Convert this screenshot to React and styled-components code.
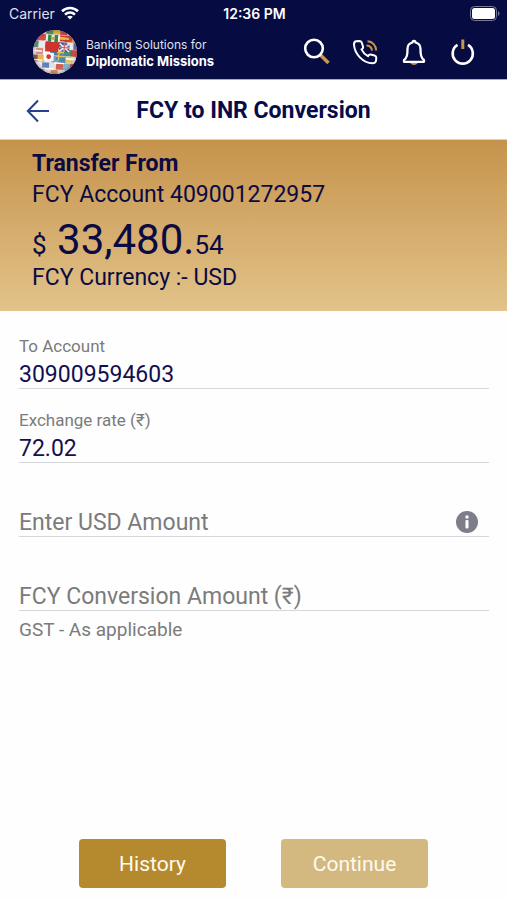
import React from 'react'
import styled, { createGlobalStyle } from 'styled-components'


const flags = [
	['#c8372f', '#f0e6e4', '#3f8a4d', '#d9b23a', '#c23b35', '#e8e4ea', '#4a62a8'],
	['#5470ae', '#d8504a', '#f2efe9', '#2f8a50', '#f3f1f0', '#cf3a2c', '#e0b040'],
	['#4f8f68', '#e9e9ef', '#c4302c', '#cf3230', '#39508f', '#ece8ee', '#5a6cb0'],
	['#e6e2e6', '#d98a78', '#f6f4f6', '#4a79ad', '#e8c44c', '#3d9470', '#c84038'],
	['#7a4a50', '#e4b44e', '#f0eef0', '#7fa4cc', '#5688bb', '#ddc768', '#e8e4e2'],
	['#d24b38', '#f1ece6', '#5a82bd', '#e4e0e2', '#d2604e', '#7bb0c8', '#b8433d'],
	['#dca85a', '#cb4638', '#ece6e4', '#c98c52', '#e6e2e2', '#4e78ae', '#d8d0cf'],
]

const Globe = () => {
	return (
		<svg width="44" height="44" viewBox="0 0 44 44" aria-hidden="true">
			<defs>
				<clipPath id="ball"><circle cx="22" cy="22" r="22" /></clipPath>
				<radialGradient id="shade">
					<stop offset="0.75" stopColor="#fff" stopOpacity="0" />
					<stop offset="1" stopColor="#5a2030" stopOpacity="0.3" />
				</radialGradient>
			</defs>
			<g clipPath="url(#ball)">
				<rect width="44" height="44" fill="#e5dde0" />
				<g transform="rotate(4 22 22)">
					{flags.map((row, y) => row.map((color, x) => (
						<rect key={`${x}-${y}`} x={x * 7 - 2 - (y % 2) * 2} y={y * 7 - 2} width="7.4" height="6.4" fill={color} />
					)))}
					<path d="M7 5h5v6H7z" fill="#d94236" />
					<path d="M12 5h2v6h-2z" fill="#f3eeee" />
					<path d="M14 5h10v7H14z" fill="#35884d" />
					<path d="M17.5 5h3v7h-3z" fill="#f0f0ea" />
					<circle cx="19" cy="8.5" r="1.6" fill="#d8a23c" />
					<path d="M26 5h9v2h-9zM26 9h9v2h-9z" fill="#cc3a30" />
					<path d="M26 7h9v2h-9z" fill="#e8bd42" />
					<path d="M12 13h13v9H12z" fill="#d0342e" />
					<path d="M26 13h10v8H26z" fill="#3f5192" />
					<path d="M26 13l10 8M36 13l-10 8M31 13v8M26 17h10" stroke="#f3e8ea" strokeWidth="1.6" />
					<path d="M31 13v8M26 17h10" stroke="#cc3f42" strokeWidth="0.8" />
					<path d="M11 23h10v8H11z" fill="#faf7f7" />
					<circle cx="16" cy="27" r="2.4" fill="#d13a3b" />
					<path d="M23 23h10v7H23z" fill="#4f86af" />
					<path d="M26 23v7M23 26h10" stroke="#e3c354" strokeWidth="1.4" />
					<path d="M0 22h9M1 31h9M22 33h10M33 28h10M10 39h12" stroke="#fff" strokeWidth="1.4" />
				</g>
				<circle cx="22" cy="22" r="22" fill="url(#shade)" />
			</g>
		</svg>
	)
}

const WifiIcon = () => (
	<svg width="18" height="14" viewBox="0 0 18 14" fill="none" stroke="#fff" strokeWidth="2.6" aria-hidden="true">
		<path d="M1 5.2C5.6 0.9 12.4 0.9 17 5.2" />
		<path d="M4 8.6C6.9 6 11.1 6 14 8.6" />
		<path d="M9 13.4L6.2 10.8C7.8 9.5 10.2 9.5 11.8 10.8Z" fill="#fff" stroke="none" />
	</svg>
)

const BatteryIcon = () => (
	<svg width="30" height="15" viewBox="0 0 30 15" aria-hidden="true">
		<rect x="0.5" y="0.5" width="26" height="14" rx="4" fill="none" stroke="#777a9c" />
		<rect x="2" y="2" width="23" height="11" rx="2.5" fill="#fff" />
		<path d="M28 5v5c2-1 2-4 0-5z" fill="#777a9c" />
	</svg>
)

const SearchIcon = () => (
	<svg width="28" height="28" viewBox="0 0 28 28" fill="none">
		<path d="M18 16.5L26.5 25" stroke="#c8954c" strokeWidth="3.6" />
		<circle cx="12" cy="10.5" r="8.8" stroke="#fff" strokeWidth="2.6" />
	</svg>
)

const PhoneIcon = () => (
	<svg width="28" height="28" viewBox="0 0 28 28" fill="none" strokeWidth="2" strokeLinejoin="round">
		<path
			d="M8.3 3L5 3.3C3.5 3.7 2.9 4.8 3 6.5C3.5 16 12 25 21.5 25.3C23.5 25.3 24.5 24.5 25 23L25.3 19.7C25.3 18.5 24.5 17.8 23.5 17.5L19.8 16.5C18.6 16.3 17.7 16.8 17 18.2C14.5 16.8 12 14.5 10.5 11.3C12 10.6 12.4 9.8 12 8.5L10.8 4.7C10.3 3.5 9.5 3 8.3 3Z"
			stroke="#fff"
		/>
		<path d="M16.5 3.3C21.5 3.5 25 7.5 25.2 12.5" stroke="#c8954c" />
		<path d="M15.5 7.5C18.8 7.7 20.8 9.6 21 12.6" stroke="#c8954c" />
	</svg>
)

const BellIcon = () => (
	<svg width="28" height="28" viewBox="0 0 28 28" fill="none">
		<path d="M10 24.5C11 27.8 17 27.8 18 24.5Z" fill="#c8954c" />
		<path
			d="M12.5 4.5C12.5 2.4 15.5 2.4 15.5 4.5C18.8 5.2 20.5 7.8 20.5 11C20.5 17 21 19.3 24 22.2V23.8H4V22.2C7 19.3 7.5 17 7.5 11C7.5 7.8 9.2 5.2 12.5 4.5Z"
			stroke="#fff"
			strokeWidth="2.3"
			strokeLinejoin="round"
		/>
	</svg>
)

const PowerIcon = () => (
	<svg width="28" height="28" viewBox="0 0 28 28" fill="none">
		<path d="M8.5 6.9A10.1 10.1 0 1 0 19 6.9" stroke="#fff" strokeWidth="2.6" />
		<path d="M13.8 1.5V11" stroke="#c8954c" strokeWidth="3" />
	</svg>
)

const BackIcon = () => (
	<svg width="24" height="24" viewBox="0 0 24 24" fill="none" stroke="#27408c" strokeWidth="2">
		<path d="M12 1.5L1.8 12L12 22.5M2 12H23" />
	</svg>
)

const InfoIcon = () => (
	<svg width="22" height="22" viewBox="0 0 22 22">
		<circle cx="11" cy="11" r="11" fill="#7e7e8b" />
		<circle cx="11" cy="6" r="1.7" fill="#fff" />
		<rect x="9.5" y="9" width="3" height="8.5" rx="1" fill="#fff" />
	</svg>
)


const App = () => {
	return (
		<Screen>
			<GlobalStyle />
			<StatusBar>
				<Carrier>Carrier <WifiIcon /></Carrier>
				<Time>12:36 PM</Time>
				<Battery><BatteryIcon /></Battery>
			</StatusBar>
			<Header>
				<Globe />
				<Brand>
					Banking Solutions for
					<strong>Diplomatic Missions</strong>
				</Brand>
				<Actions>
					<IconButton aria-label="Search"><SearchIcon /></IconButton>
					<IconButton aria-label="Call"><PhoneIcon /></IconButton>
					<IconButton aria-label="Notifications"><BellIcon /></IconButton>
					<IconButton aria-label="Log out"><PowerIcon /></IconButton>
				</Actions>
			</Header>
			<TitleBar>
				<IconButton aria-label="Back"><BackIcon /></IconButton>
				<h1>FCY to INR Conversion</h1>
			</TitleBar>
			<AccountCard>
				<h2>Transfer From</h2>
				<p>FCY Account 409001272957</p>
				<Balance>$<b> 33,480.</b>54</Balance>
				<p>FCY Currency :- USD</p>
			</AccountCard>
			<Form>
				<Field>
					<label htmlFor="account">To Account</label>
					<Input id="account" defaultValue="309009594603" />
				</Field>
				<Field>
					<label htmlFor="rate">Exchange rate (₹)</label>
					<Input id="rate" defaultValue="72.02" readOnly />
				</Field>
				<Field>
					<InputRow>
						<Input aria-label="Enter USD Amount" placeholder="Enter USD Amount" />
						<IconButton type="button" aria-label="Information"><InfoIcon /></IconButton>
					</InputRow>
				</Field>
				<Field>
					<Input aria-label="FCY Conversion Amount (₹)" placeholder="FCY Conversion Amount (₹)" />
				</Field>
				<Note>GST - As applicable</Note>
			</Form>
			<ButtonGroup>
				<HistoryButton>History</HistoryButton>
				<ContinueButton>Continue</ContinueButton>
			</ButtonGroup>
		</Screen>
	)
}


const GlobalStyle = createGlobalStyle`
	* {
		box-sizing: border-box;
	}

	body, h1, h2, p {
		margin: 0;
	}

	body {
		font-family: Roboto, sans-serif;
		background: #fefefe;
	}

	svg {
		display: block;
		flex-shrink: 0;
	}
`;

const Screen = styled.div`
	min-height: 100vh;
	display: flex;
	flex-direction: column;
`;

const StatusBar = styled.div`
	height: 28px;
	padding: 0 7px 2px 9px;
	display: grid;
	grid-template-columns: 1fr auto 1fr;
	align-items: center;
	background-color: #060b42;
	color: white;
	font-family: Inter, sans-serif;
	font-size: 14px;
`;

const Carrier = styled.div`
	display: flex;
	align-items: center;
	gap: 6px;
	color: #dfe0ea;
`;

const Time = styled.div`
	font-weight: 600;
`;

const Battery = styled.div`
	justify-self: end;
`;

const Header = styled.header`
	height: 52px;
	padding: 0 30px 4px 33px;
	display: flex;
	align-items: center;
	gap: 9px;
	background-color: #060b42;
	border-bottom: 1px solid #a9abc4;
`;

const Brand = styled.div`
	padding-top: 2px;
	color: #dfe0ea;
	font-family: Inter, sans-serif;
	font-size: 12px;
	line-height: 17px;

	strong {
		display: block;
		color: white;
		font-size: 13px;
		font-weight: 700;
	}
`;

const Actions = styled.div`
	margin-left: auto;
	display: flex;
	gap: 21px;
`;

const IconButton = styled.button`
	padding: 0;
	border: none;
	background: none;
	cursor: pointer;
`;

const TitleBar = styled.div`
	height: 60px;
	padding: 2px 26px 0;
	display: grid;
	grid-template-columns: 24px 1fr 24px;
	align-items: center;
	background-color: white;
	border-bottom: 1px solid #d9d3cb;

	h1 {
		text-align: center;
		color: #060b4a;
		font-size: 23px;
		font-weight: 700;
	}
`;

const AccountCard = styled.section`
	padding: 8px 32px 18px;
	background: linear-gradient(#c6934c, #e2c38a);
	color: #0b0a42;
	font-size: 23px;
	line-height: 31px;

	h2 {
		font-size: 23px;
		font-weight: 700;
	}
`;

const Balance = styled.div`
	height: 52px;
	font-size: 26px;
	line-height: 60px;
	white-space: nowrap;

	b {
		font-size: 42px;
		font-weight: 400;
	}
`;

const Form = styled.form`
	padding: 4px 18px 0 19px;
`;

const Field = styled.div`
	height: 74px;
	display: flex;
	flex-direction: column;
	justify-content: flex-end;
	gap: 4px;
	border-bottom: 1px solid #d6d7d9;

	label {
		color: #7b7b7b;
		font-size: 17px;
		line-height: 20px;
	}
`;

const InputRow = styled.div`
	padding-right: 11px;
	display: flex;
	align-items: center;
`;

const Input = styled.input`
	width: 100%;
	height: 28px;
	padding: 0;
	border: none;
	outline: none;
	background: none;
	color: #12104f;
	font-family: inherit;
	font-size: 23px;

	&::placeholder {
		color: #7b7b7b;
		opacity: 1;
	}
`;

const Note = styled.p`
	padding-top: 7px;
	color: #7b7b7b;
	font-size: 19px;
	line-height: 24px;
`;

const ButtonGroup = styled.div`
	margin-top: auto;
	padding: 24px 0 12px;
	display: flex;
	justify-content: center;
	gap: 55px;
`;

const HistoryButton = styled.button`
	width: 147px;
	height: 49px;
	border: none;
	border-radius: 4px;
	background-color: #b58a2e;
	color: #fffaf0;
	font-family: inherit;
	font-size: 21px;
	cursor: pointer;
`;

const ContinueButton = styled(HistoryButton)`
	background-color: #d3b980;
`;


export default App
